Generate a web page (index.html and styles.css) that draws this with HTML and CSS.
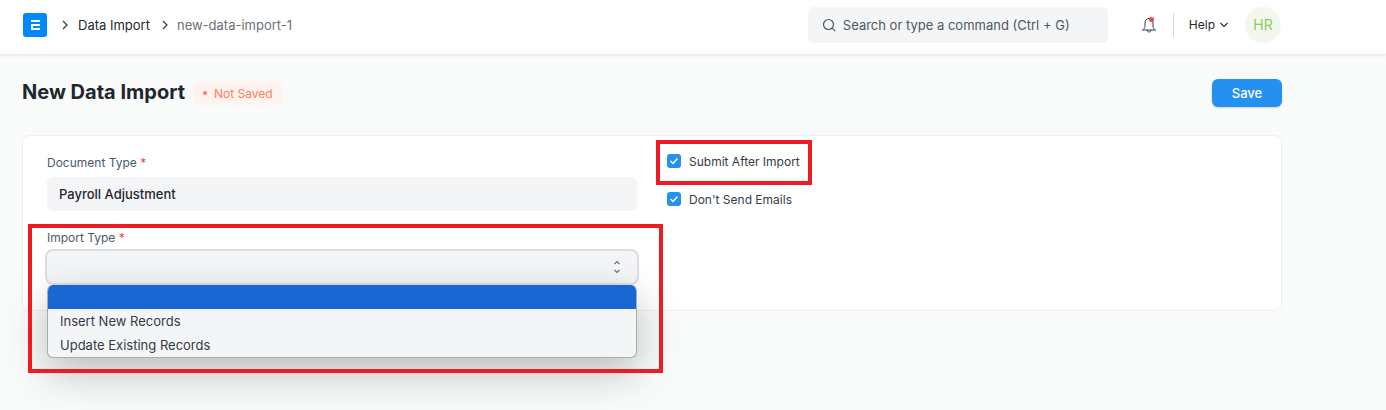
FILE: index.html
```html
<!DOCTYPE html>
<html lang="en">
<head>
  <meta charset="UTF-8" />
  <meta name="viewport" content="width=device-width, initial-scale=1.0" />
  <title>New Data Import</title>
  <link rel="stylesheet" href="styles.css">
</head>
<body>
  <header class="navbar">
    <div class="crumbs">
      <svg class="logo" width="24" height="24" viewBox="0 0 24 24">
        <rect width="24" height="24" rx="3" fill="#0089ff"/>
        <path d="M8 7h9v2H8zM8 11h9v2h-7v2h7v2H8z" fill="#fff"/>
      </svg>
      <svg class="chev" width="8" height="10" viewBox="0 0 8 10"><path d="M2 1l4 4-4 4" fill="none" stroke="#333c44" stroke-width="1.200"/></svg>
      <a class="crumb" href="#">Data Import</a>
      <svg class="chev" width="8" height="10" viewBox="0 0 8 10"><path d="M2 1l4 4-4 4" fill="none" stroke="#333c44" stroke-width="1.200"/></svg>
      <span class="crumb-current">new-data-import-1</span>
    </div>
    <div class="nav-right">
      <div class="search">
        <svg width="14" height="14" viewBox="0 0 14 14"><circle cx="6.500" cy="6.500" r="5" fill="none" stroke="#4c5a67" stroke-width="1.200"/><path d="M10.200 10.200l3 3" stroke="#4c5a67" stroke-width="1.200"/></svg>
        <span>Search or type a command (Ctrl + G)</span>
      </div>
      <span class="bell">
        <svg width="18" height="20" viewBox="0 0 18 20"><path d="M10 3.500C7.500 3.500 6 5.500 6 8v3.500c0 1.500-1 2.500-2.500 3.500h13c-1.500-1-2.500-2-2.500-3.500V8c0-2.500-1.500-4.500-4-4.500zM8 15c0 2.700 4 2.700 4 0" fill="none" stroke="#333c44" stroke-width="1"/></svg>
        <i class="bell-dot"></i>
      </span>
      <span class="divider"></span>
      <span class="help">Help
        <svg width="10" height="6" viewBox="0 0 10 6"><path d="M1.500 1l3.500 3.500L8.500 1" fill="none" stroke="#1f272e" stroke-width="1.100"/></svg>
      </span>
      <span class="avatar">HR</span>
    </div>
  </header>

  <main class="page">
    <div class="page-head">
      <div class="title-wrap">
        <h1>New Data Import</h1>
        <span class="status"><i></i>Not Saved</span>
      </div>
      <button class="save">Save</button>
    </div>

    <section class="card">
      <div class="col">
        <div class="field">
          <label>Document Type <b>*</b></label>
          <div class="value">Payroll Adjustment</div>
        </div>
        <div class="field field-select">
          <label>Import Type <b>*</b></label>
          <div class="select">
            <svg width="10" height="16" viewBox="0 0 10 16"><path d="M2.500 5l2.500-2.500L7.500 5M2.500 11l2.500 2.500L7.500 11" fill="none" stroke="#687178" stroke-width="1.200"/></svg>
          </div>
          <ul class="options">
            <li class="selected">&nbsp;</li>
            <li>Insert New Records</li>
            <li>Update Existing Records</li>
          </ul>
          <div class="mark mark-select"></div>
        </div>
      </div>
      <div class="col col-right">
        <div class="check check-first">
          <span class="box"><svg width="10" height="8" viewBox="0 0 10 8"><path d="M1.500 4l2.500 2.500 4.500-5" fill="none" stroke="#fff" stroke-width="1.500"/></svg></span>
          Submit After Import
          <div class="mark mark-check"></div>
        </div>
        <div class="check">
          <span class="box"><svg width="10" height="8" viewBox="0 0 10 8"><path d="M1.500 4l2.500 2.500 4.500-5" fill="none" stroke="#fff" stroke-width="1.500"/></svg></span>
          Don't Send Emails
        </div>
      </div>
    </section>
  </main>
</body>
</html>
```
FILE: styles.css
```css
* {
  box-sizing: border-box;
}
body {
  font-family: Inter, "Liberation Sans", sans-serif;
  margin: 0;
  height: 410px;
  overflow: hidden;
  background-color: #f9fafa;
  color: #1f272e;
  font-size: 13px;
}
.navbar {
  height: 55px;
  background-color: #fff;
  border-bottom: 1px solid #e8eaeb;
  box-shadow: 0 1px 3px rgba(0, 0, 0, 0.06);
  padding: 0 105px 0 23px;
  display: flex;
  justify-content: space-between;
  align-items: center;
}
.crumbs {
  display: flex;
  align-items: center;
  margin-top: -5px;
}
.logo {
  margin-right: 14px;
}
.crumb {
  color: #1f272e;
  text-decoration: none;
  margin: 0 11px 0 9px;
}
.crumb-current {
  color: #687178;
  margin-left: 8px;
}
.nav-right {
  display: flex;
  align-items: center;
  margin-top: -5px;
}
.search {
  width: 300px;
  height: 36px;
  background-color: #f4f5f6;
  border-radius: 6px;
  display: flex;
  align-items: center;
  gap: 7px;
  padding-left: 14px;
  color: #4c5a67;
  margin-right: 31px;
}
.bell {
  position: relative;
  display: flex;
  width: 18px;
  margin-right: 16px;
}
.bell-dot {
  position: absolute;
  top: 2px;
  right: 3px;
  width: 5px;
  height: 5px;
  border-radius: 50%;
  background-color: #f0484e;
}
.divider {
  width: 1px;
  height: 24px;
  background-color: #d1d8dd;
  margin-right: 15px;
}
.help {
  font-size: 12px;
  display: flex;
  align-items: center;
  gap: 4px;
  margin-right: 16px;
}
.avatar {
  width: 36px;
  height: 36px;
  border-radius: 50%;
  background-color: #f2f8ec;
  color: #8ecc5e;
  font-size: 14px;
  display: flex;
  align-items: center;
  justify-content: center;
}
.page {
  padding: 0 104px 0 22px;
}
.page-head {
  height: 80px;
  display: flex;
  justify-content: space-between;
  align-items: center;
  padding-bottom: 4px;
}
.title-wrap {
  display: flex;
  align-items: center;
  gap: 9px;
  margin-top: -2px;
}
h1 {
  font-size: 20px;
  font-weight: 700;
  margin: 0;
}
.status {
  height: 24px;
  background-color: #fff3ef;
  color: #ff7d5c;
  border-radius: 6px;
  padding: 0 10px 0 9px;
  margin-top: 2px;
  font-size: 12px;
  display: flex;
  align-items: center;
  gap: 7px;
}
.status i {
  width: 4px;
  height: 4px;
  border-radius: 50%;
  background-color: #ff7d5c;
}
.save {
  width: 70px;
  height: 28px;
  border: 0;
  border-radius: 6px;
  background-color: #2490ef;
  color: #fff;
  font-family: inherit;
  font-size: 13px;
  font-weight: 500;
  box-shadow: 0 1px 2px rgba(0, 0, 0, 0.15);
}
.card {
  height: 176px;
  background-color: #fff;
  border: 1px solid #edf0f2;
  border-radius: 8px;
  display: flex;
  padding: 18px 0 0 24px;
}
.col {
  width: 590px;
}
.col-right {
  margin-left: 30px;
}
.field label {
  display: block;
  font-size: 12px;
  color: #4c5a67;
  height: 18px;
  line-height: 18px;
  margin-bottom: 5px;
}
.field label b {
  color: #f0484e;
  font-weight: 400;
}
.value {
  height: 34px;
  background-color: #f4f5f6;
  border-radius: 6px;
  font-weight: 500;
  padding-left: 12px;
  line-height: 34px;
  color: #1f272e;
}
.field-select {
  position: relative;
  margin-top: 18px;
}
.field-select label {
  margin-bottom: 2px;
}
.select {
  height: 36px;
  margin: 0 -2px;
  background-color: #f4f5f6;
  border: 2px solid #dcdee0;
  border-radius: 8px;
  display: flex;
  align-items: center;
  justify-content: flex-end;
  padding-right: 15px;
}
.options {
  position: absolute;
  left: 0;
  top: 56px;
  width: 590px;
  margin: 0;
  padding: 0;
  list-style: none;
  background-color: #f4f5f6;
  border: 1px solid #a9abad;
  border-top: 0;
  border-radius: 6px;
  overflow: hidden;
  box-shadow: 0 14px 40px rgba(0, 0, 0, 0.25);
  z-index: 2;
}
.options li {
  height: 24px;
  line-height: 24px;
  padding-left: 12px;
  color: #333c44;
}
.options .selected {
  background-color: #1967d2;
}
.check {
  position: relative;
  display: flex;
  align-items: center;
  gap: 8px;
  font-size: 12px;
  color: #333c44;
  height: 18px;
  margin-bottom: 20px;
}
.check-first {
  margin-top: -2px;
}
.box {
  width: 14px;
  height: 14px;
  border-radius: 3px;
  background-color: #2490ef;
  display: flex;
  align-items: center;
  justify-content: center;
}
.mark {
  position: absolute;
  border: 4px solid #ed1c24;
  z-index: 3;
}
.mark-check {
  left: -11px;
  top: -12px;
  width: 156px;
  height: 45px;
}
.mark-select {
  left: -19px;
  top: -5px;
  width: 635px;
  height: 149px;
}
```
